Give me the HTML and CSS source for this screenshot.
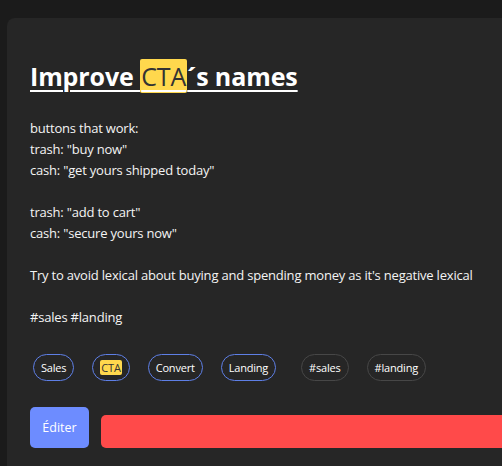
FILE: index.html
```html
<!DOCTYPE html>
<html>
<head>
<meta charset="utf-8">
<link rel="stylesheet" href="styles.css">
</head>
<body>
<div class="card">
  <h1 class="title">Improve <mark class="hl">CTA</mark>´s names</h1>
  <div class="body">
    <p>buttons that work:<br>trash: "buy now"<br>cash: "get yours shipped today"</p>
    <p>trash: "add to cart"<br>cash: "secure yours now"</p>
    <p>Try to avoid lexical about buying and spending money as it's negative lexical</p>
    <p>#sales #landing</p>
  </div>
  <div class="tags">
    <div class="group">
      <span class="tag">Sales</span>
      <span class="tag"><span class="tag-hl">CTA</span></span>
      <span class="tag">Convert</span>
      <span class="tag">Landing</span>
    </div>
    <div class="group">
      <span class="tag hash">#sales</span>
      <span class="tag hash">#landing</span>
    </div>
  </div>
  <div class="actions">
    <button class="btn-edit">Éditer</button>
    <div class="btn-red"></div>
  </div>
</div>
</body>
</html>
```
FILE: styles.css
```css
html, body {
  margin: 0;
  height: 100%;
  background: #1b1b1b;
}
body {
  box-sizing: border-box;
  padding: 18px 0 0 7px;
  font-family: "Open Sans", "Noto Sans", sans-serif;
  color: #f4f4f4;
  overflow: hidden;
}
.card {
  box-sizing: border-box;
  height: 100%;
  background: #262626;
  border-radius: 8px 0 0 0;
  padding: 41px 0 0 23px;
}
.title {
  margin: 0;
  font-size: 25px;
  line-height: 34px;
  font-weight: 700;
  color: #ffffff;
  text-decoration: underline;
  text-decoration-thickness: 2px;
  text-underline-offset: 4px;
  letter-spacing: -0.1px;
}
.hl {
  background: #ffd84d;
  color: #333333;
  font-weight: 400;
  border-radius: 2px;
  padding: 0 1px;
}
.body {
  margin-top: 25px;
  font-size: 13px;
  line-height: 21px;
  letter-spacing: -0.2px;
}
.body p {
  margin: 0 0 21px 0;
}
.body p:last-child {
  margin-bottom: 0;
}
.tags {
  display: flex;
  gap: 25px;
  margin-top: 26px;
  margin-left: 3px;
}
.group {
  display: flex;
  gap: 18px;
}
.tag {
  display: inline-flex;
  align-items: center;
  height: 27px;
  box-sizing: border-box;
  padding: 0 7px;
  border: 1px solid #5e7fe6;
  border-radius: 14px;
  font-size: 11px;
  color: #ffffff;
  letter-spacing: -0.2px;
}
.tag.hash {
  border-color: #474747;
}
.tag-hl {
  background: #ffd84d;
  color: #333333;
  border-radius: 2px;
  padding: 0 1px;
}
.actions {
  display: flex;
  align-items: flex-end;
  gap: 12px;
  margin-top: 26px;
}
.btn-edit {
  width: 59px;
  height: 41px;
  background: #6d8cff;
  border: none;
  border-radius: 5px;
  color: #ffffff;
  font-family: inherit;
  font-size: 12.5px;
  padding: 0;
}
.btn-red {
  flex: 1;
  height: 33px;
  background: #ff4a4a;
  border-radius: 5px 0 0 5px;
}
```
